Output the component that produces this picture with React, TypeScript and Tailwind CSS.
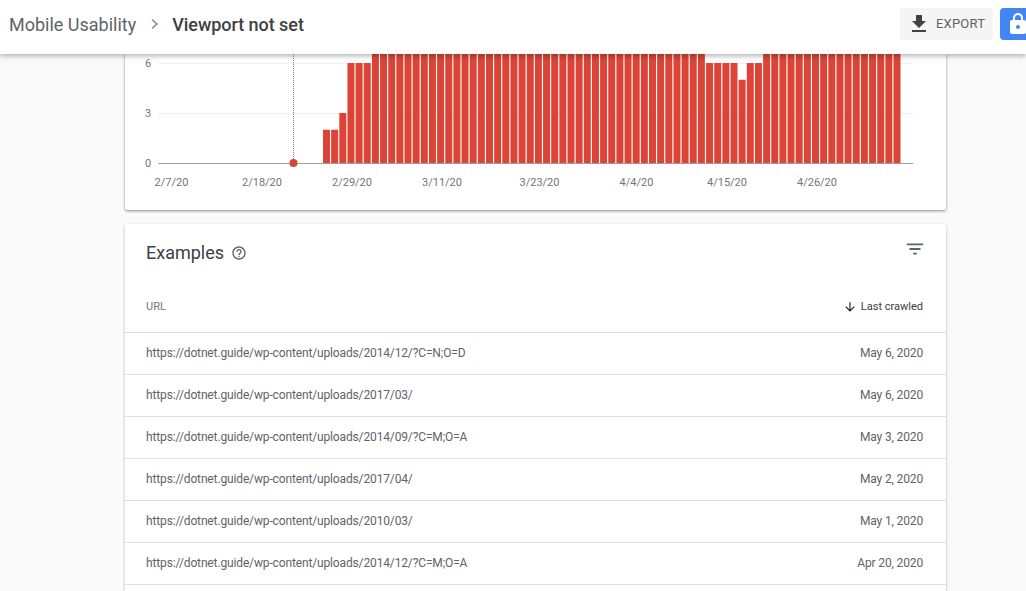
const HIGH = 9;

// daily values read off the chart, the ones above 6 run behind the header
const values = [
  2, 2, 3, 6, 6, 6,
  ...Array(41).fill(HIGH),
  6, 6, 6, 6, 5, 6, 6,
  ...Array(17).fill(HIGH),
];

const dateLabels = [
  { x: 46.5, label: "2/7/20" },
  { x: 137, label: "2/18/20" },
  { x: 227, label: "2/29/20" },
  { x: 317, label: "3/11/20" },
  { x: 414.5, label: "3/23/20" },
  { x: 511.5, label: "4/4/20" },
  { x: 602, label: "4/15/20" },
  { x: 692, label: "4/26/20" },
];

const rows = [
  { url: "https://dotnet.guide/wp-content/uploads/2014/12/?C=N;O=D", date: "May 6, 2020" },
  { url: "https://dotnet.guide/wp-content/uploads/2017/03/", date: "May 6, 2020" },
  { url: "https://dotnet.guide/wp-content/uploads/2014/09/?C=M;O=A", date: "May 3, 2020" },
  { url: "https://dotnet.guide/wp-content/uploads/2017/04/", date: "May 2, 2020" },
  { url: "https://dotnet.guide/wp-content/uploads/2010/03/", date: "May 1, 2020" },
  { url: "https://dotnet.guide/wp-content/uploads/2014/12/?C=M;O=A", date: "Apr 20, 2020" },
];

function Chart() {
  // svg origin is the card's left edge / the header's bottom edge
  const baseY = 109;
  const unit = 16.67;
  return (
    <svg width="821" height="156" viewBox="0 0 821 156" className="block">
      <g fill="#757575" fontSize="11" fontFamily="Roboto, sans-serif">
        <text x="20" y="13">6</text>
        <text x="20" y="63">3</text>
        <text x="20" y="113">0</text>
        {dateLabels.map((d) => (
          <text key={d.label} x={d.x} y="132" textAnchor="middle">
            {d.label}
          </text>
        ))}
      </g>
      <line x1="33" x2="788" y1="9.5" y2="9.5" stroke="#eeeeee" />
      <line x1="33" x2="788" y1="59.5" y2="59.5" stroke="#eeeeee" />
      <line x1="33" x2="788" y1={baseY + 0.5} y2={baseY + 0.5} stroke="#9e9e9e" />
      <line x1="168.5" x2="168.5" y1="0" y2={baseY} stroke="#8a8a8a" strokeDasharray="1 1" />
      <circle cx="168.5" cy={baseY} r="4" fill="#db4437" />
      {values.map((v, i) => (
        <rect
          key={i}
          x={198 + i * 8.15}
          y={baseY - v * unit}
          width="7"
          height={v * unit}
          rx="0.5"
          fill="#db4437"
        />
      ))}
    </svg>
  );
}

export default function App() {
  return (
    <div className="h-screen flex flex-col overflow-hidden bg-[#fafafa] font-['Roboto',sans-serif]">
      {/* Header */}
      <header className="relative z-10 h-[54px] shrink-0 bg-white flex items-center pl-[9px] pb-[6px] shadow-[0_2px_5px_rgba(0,0,0,0.3)]">
        <span className="text-[18px] text-[#5f6368]">Mobile Usability</span>
        <svg width="24" height="24" viewBox="0 0 24 24" className="ml-[7px] mr-[5px]" fill="none" stroke="#80868b" strokeWidth="1.5">
          <path d="M9 7.5l5 4.5-5 4.5" />
        </svg>
        <span className="text-[18px] font-medium text-[#3c4043] tracking-[-0.05px]">Viewport not set</span>
        <div className="ml-auto flex items-center gap-[7px]">
          <button className="h-8 w-[93px] bg-[#f5f5f5] rounded-[3px] flex items-center pl-[7px] text-[#5f6368] text-[13px] tracking-[0.2px]">
            <svg width="24" height="24" viewBox="0 0 24 24" fill="#424242">
              <path d="M19 9h-4V3H9v6H5l7 7 7-7zM5 18v2h14v-2H5z" />
            </svg>
            <span className="ml-[5px]">EXPORT</span>
          </button>
          <button className="h-8 w-[26px] bg-[#4285f4] rounded-l-[4px] flex items-center pl-[6px] overflow-hidden">
            <svg width="24" height="24" viewBox="0 0 24 24" fill="#ffffff" className="shrink-0">
              <path d="M18 8h-1V6c0-2.76-2.24-5-5-5S7 3.24 7 6v2H6c-1.1 0-2 .9-2 2v10c0 1.1.9 2 2 2h12c1.1 0 2-.9 2-2V10c0-1.1-.9-2-2-2zm-6 9c-1.1 0-2-.9-2-2s.9-2 2-2 2 .9 2 2-.9 2-2 2zm3.1-9H8.9V6c0-1.71 1.39-3.1 3.1-3.1 1.71 0 3.1 1.39 3.1 3.1v2z" />
            </svg>
          </button>
        </div>
      </header>

      <main className="w-[821px] ml-[125px] flex flex-col gap-[14px]">
        {/* Chart card */}
        <section className="bg-white rounded-b-[2px] shadow-[0_1px_3px_rgba(0,0,0,0.45)]">
          <Chart />
        </section>

        {/* Examples card */}
        <section className="bg-white rounded-[2px] shadow-[0_1px_3px_rgba(0,0,0,0.3)]">
          <div className="h-[61px] flex items-center pl-[21px] pr-[20px]">
            <h2 className="text-[18px] text-[#3c4043] mt-[-4px]">Examples</h2>
            <svg width="16" height="16" viewBox="0 0 24 24" fill="#5f6368" className="ml-[7px] mt-[-3px]">
              <path d="M11 18h2v-2h-2v2zm1-16C6.48 2 2 6.48 2 12s4.48 10 10 10 10-4.48 10-10S17.52 2 12 2zm0 18c-4.41 0-8-3.59-8-8s3.59-8 8-8 8 3.59 8 8-3.59 8-8 8zm0-14c-2.21 0-4 1.79-4 4h2c0-1.1.9-2 2-2s2 .9 2 2c0 2-3 1.75-3 5h2c0-2.25 3-2.5 3-5 0-2.21-1.79-4-4-4z" />
            </svg>
            <svg width="22" height="22" viewBox="0 0 24 24" fill="#5f6368" className="ml-auto mt-[-11px]">
              <path d="M10 18h4v-2h-4v2zM3 6v2h18V6H3zm3 7h12v-2H6v2z" />
            </svg>
          </div>
          <div className="h-[48px] flex items-center justify-between pl-[21px] pr-[23px] pb-[3px] text-[11px] border-b border-[#e0e0e0]">
            <span className="text-[#757575]">URL</span>
            <span className="flex items-center text-[#3c4043]">
              <svg width="14" height="14" viewBox="0 0 24 24" fill="#202124" className="mr-[4px]">
                <path d="M20 12l-1.41-1.41L13 16.17V4h-2v12.17l-5.58-5.59L4 12l8 8 8-8z" />
              </svg>
              Last crawled
            </span>
          </div>
          {rows.map((r) => (
            <div
              key={r.url}
              className="h-[42px] flex items-center justify-between pl-[21px] pr-[23px] pb-[2px] text-[12px] tracking-[-0.14px] text-[#5f6368] border-b border-[#e0e0e0]"
            >
              <span>{r.url}</span>
              <span>{r.date}</span>
            </div>
          ))}
          {/* next row starts below the fold */}
          <div className="h-[42px]" />
        </section>
      </main>
    </div>
  );
}
